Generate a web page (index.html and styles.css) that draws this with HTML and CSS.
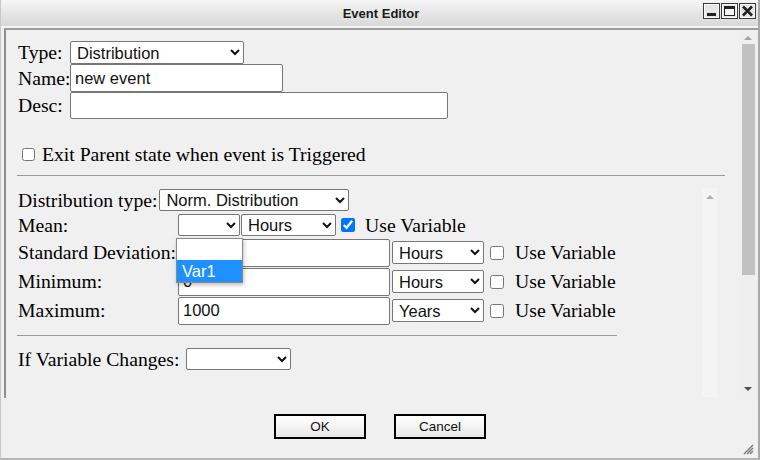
FILE: index.html
```html
<!DOCTYPE html>
<html>
<head>
<meta charset="utf-8">
<link rel="stylesheet" href="styles.css">
</head>
<body>
<div class="window">
  <div class="titlebar">
    <div class="title">Event Editor</div>
    <div class="ctrls">
      <svg class="wbtn" width="17" height="16" viewBox="0 0 17 16"><rect x="0.5" y="0.5" width="16" height="15" fill="#e6e6e6" stroke="#3a3a3a"/><rect x="1.5" y="1.5" width="14" height="13" fill="none" stroke="#fafafa"/><rect x="4" y="10" width="9" height="3" fill="#222"/></svg>
      <svg class="wbtn" width="17" height="16" viewBox="0 0 17 16"><rect x="0.5" y="0.5" width="16" height="15" fill="#e6e6e6" stroke="#3a3a3a"/><rect x="1.5" y="1.5" width="14" height="13" fill="none" stroke="#fafafa"/><rect x="3.5" y="3.5" width="10" height="9" fill="#f4f4f4" stroke="#222"/><rect x="3" y="3" width="11" height="3" fill="#222"/></svg>
      <svg class="wbtn" width="17" height="16" viewBox="0 0 17 16"><rect x="0.5" y="0.5" width="16" height="15" fill="#e6e6e6" stroke="#3a3a3a"/><rect x="1.5" y="1.5" width="14" height="13" fill="none" stroke="#fafafa"/><path d="M4 3.5 L13 12.5 M13 3.5 L4 12.5" stroke="#222" stroke-width="2.6"/></svg>
    </div>
  </div>
  <div class="main">
    <div class="pane">
      <div class="content">
        <div class="form-grid">
          <div class="lbl row-type">Type:</div>
          <div class="row-type"><select class="sel sel-type"><option>Distribution</option></select></div>
          <div class="lbl row-name">Name:</div>
          <div class="row-name"><input class="txt txt-name" type="text" value="new event"></div>
          <div class="lbl row-desc">Desc:</div>
          <div class="row-desc"><input class="txt txt-desc" type="text" value=""></div>
        </div>
        <label class="exit"><input type="checkbox" class="cb cb-exit"> Exit Parent state when event is Triggered</label>
        <div class="hr hr-wide"></div>
        <div class="dist">
          <div class="dist-body">
            <div class="drow drow-type">
              <span class="lbl">Distribution type:</span>
              <select class="sel sel-dist"><option>Norm. Distribution</option></select>
            </div>
            <div class="drow drow-mean">
              <span class="lbl dlbl">Mean:</span>
              <div class="ctl">
                <div class="popwrap">
                  <select class="sel sel-var"><option></option></select>
                  <div class="popup">
                    <div class="opt"></div>
                    <div class="opt opt-sel">Var1</div>
                  </div>
                </div>
                <select class="sel sel-unit-mean"><option>Hours</option></select>
                <input type="checkbox" class="cb cb-mean" checked>
                <span class="usevar">Use Variable</span>
              </div>
            </div>
            <div class="drow drow-in">
              <span class="lbl dlbl">Standard Deviation:</span>
              <div class="ctl">
                <input class="txt txt-num" type="text" value="">
                <select class="sel sel-unit"><option>Hours</option></select>
                <input type="checkbox" class="cb cb-row">
                <span class="usevar">Use Variable</span>
              </div>
            </div>
            <div class="drow drow-in">
              <span class="lbl dlbl">Minimum:</span>
              <div class="ctl">
                <input class="txt txt-num" type="text" value="0">
                <select class="sel sel-unit"><option>Hours</option></select>
                <input type="checkbox" class="cb cb-row">
                <span class="usevar">Use Variable</span>
              </div>
            </div>
            <div class="drow drow-in">
              <span class="lbl dlbl">Maximum:</span>
              <div class="ctl">
                <input class="txt txt-num" type="text" value="1000">
                <select class="sel sel-unit"><option>Years</option></select>
                <input type="checkbox" class="cb cb-row">
                <span class="usevar">Use Variable</span>
              </div>
            </div>
            <div class="hr hr-narrow"></div>
            <div class="drow drow-ifvar">
              <span class="lbl">If Variable Changes:</span>
              <select class="sel sel-ifvar"><option></option></select>
            </div>
          </div>
          <div class="mini-scroll"><span class="arr arr-up arr-light"></span></div>
        </div>
      </div>
      <div class="vscroll">
        <span class="arr arr-up"></span>
        <div class="thumb"></div>
        <div class="track"></div>
        <span class="arr arr-down"></span>
      </div>
    </div>
    <div class="actions">
      <button class="btn">OK</button>
      <button class="btn">Cancel</button>
    </div>
    <svg class="grip" width="12" height="12" viewBox="0 0 12 12"><path d="M11 2 L2 11 M11 5 L5 11 M11 8 L8 11" stroke="#777" stroke-width="1.4"/></svg>
  </div>
</div>
</body>
</html>
```

FILE: styles.css
```css
* { box-sizing: border-box; }
html, body { margin: 0; padding: 0; }
body {
  width: 760px;
  height: 460px;
  overflow: hidden;
  background: #f0f0f0;
  font-family: "Liberation Serif", "Times New Roman", serif;
  color: #000;
}
.window {
  width: 760px;
  height: 460px;
  display: flex;
  flex-direction: column;
  background: #f0f0f0;
  border-right: 2px solid #a9a9a9;
  border-bottom: 2px solid #b4b4b4;
  border-left: 1px solid #c8c8c8;
}
.titlebar {
  height: 28px;
  flex: none;
  position: relative;
  display: flex;
  align-items: center;
  justify-content: center;
  background: linear-gradient(#f6f6f6, #e6e6e6 50%, #d9d9d9);
  border-bottom: 2px solid #f4f4f4;
}
.title {
  font-family: "Liberation Sans", Arial, sans-serif;
  font-weight: bold;
  font-size: 13px;
  color: #1a1a1a;
  margin-left: 3px;
}
.ctrls {
  position: absolute;
  right: 2px;
  top: 3px;
  display: flex;
  gap: 1px;
}
.wbtn { display: block; }
.main {
  flex: 1;
  display: flex;
  flex-direction: column;
  position: relative;
}
.pane {
  height: 370px;
  margin-left: 3px;
  border-top: 2px solid #9d9d9d;
  border-left: 2px solid #8f8f8f;
  display: flex;
}
.content {
  flex: 1;
  padding: 11px 0 0 12px;
  position: relative;
}
.form-grid {
  display: grid;
  grid-template-columns: 52px auto;
  grid-template-rows: 23px 28px 27px;
  align-items: center;
  justify-items: start;
}
.lbl {
  font-size: 19.7px;
  white-space: nowrap;
}
.sel {
  font-family: "Liberation Sans", Arial, sans-serif;
  font-size: 16.5px;
  color: #111;
  height: 22px;
  border: 1px solid #767676;
  border-radius: 2px;
  background: #fff;
  padding: 0 0 0 2px;
  margin: 0;
  display: block;
}
.txt {
  font-family: "Liberation Sans", Arial, sans-serif;
  font-size: 16.5px;
  color: #111;
  height: 28px;
  border: 1px solid #767676;
  border-radius: 2px;
  background: #fff;
  padding: 0 4px;
  margin: 0;
  display: block;
}
.sel-type { width: 174px; height: 23px; }
.txt-name { width: 213px; }
.txt-desc { width: 378px; height: 27px; }
.exit {
  display: flex;
  align-items: center;
  font-size: 19.7px;
  margin-top: 25px;
  height: 20px;
  white-space: pre;
}
.cb {
  width: 14px;
  height: 14px;
  margin: 0 3px 0 4px;
}
.cb-exit {
  width: 13px;
  height: 13px;
  margin: 0 2px 0 4px;
}
.hr {
  height: 1px;
  background: #9a9a9a;
  margin-left: -1px;
}
.hr-wide {
  width: 708px;
  margin-top: 11px;
}
.dist {
  display: flex;
  margin-top: 12px;
  height: 209px;
}
.dist-body {
  width: 684px;
}
.mini-scroll {
  width: 15px;
  background: #f4f4f4;
  display: flex;
  justify-content: center;
  padding-top: 7px;
}
.drow {
  display: flex;
  align-items: center;
}
.drow-type { height: 24px; }
.drow-type .lbl { margin-right: 2px; }
.sel-dist { width: 190px; }
.dlbl { width: 160px; }
.ctl {
  display: flex;
  align-items: center;
}
.drow-mean { height: 26px; }
.drow-in { height: 29px; }
.popwrap { position: relative; }
.sel-var { width: 62px; }
.sel-unit-mean { width: 95px; margin-left: 1px; }
.cb-mean { margin: 0 10px 0 5px; }
.usevar { font-size: 19.7px; }
.txt-num { width: 212px; }
.sel-unit { width: 92px; height: 23px; margin-left: 2px; }
.cb-row { margin: 0 11px 0 6px; }
.popup {
  position: absolute;
  left: -2px;
  top: 24px;
  width: 67px;
  height: 45px;
  background: #fff;
  border: 1px solid #8a8a8a;
  box-shadow: 1px 2px 4px rgba(0,0,0,0.25);
  font-family: "Liberation Sans", Arial, sans-serif;
  font-size: 16.5px;
  z-index: 5;
}
.opt {
  height: 21px;
  line-height: 21px;
  padding-left: 5px;
}
.opt-sel {
  height: 22px;
  line-height: 22px;
  background: #1e90ff;
  color: #fff;
}
.hr-narrow {
  width: 600px;
  margin-top: 10px;
}
.drow-ifvar {
  height: 46px;
}
.drow-ifvar .lbl { margin-right: 7px; }
.sel-ifvar { width: 105px; }
.vscroll {
  width: 20px;
  flex: none;
  display: flex;
  flex-direction: column;
  align-items: center;
  padding: 6px 0 7px 0;
  background: #efefef;
}
.thumb {
  width: 13px;
  height: 231px;
  margin-top: 4px;
  background: #c1c1c1;
}
.track { flex: 1; }
.arr {
  width: 0;
  height: 0;
  border-left: 4px solid transparent;
  border-right: 4px solid transparent;
  display: block;
}
.arr-up { border-bottom: 4px solid #a3a3a3; }
.arr-light { border-bottom-color: #b0b0b0; }
.arr-down { border-top: 4px solid #505050; }
.actions {
  display: flex;
  justify-content: center;
  gap: 28px;
  padding-top: 16px;
  margin-left: 1px;
}
.btn {
  width: 92px;
  height: 25px;
  border: 2px solid #000;
  background: linear-gradient(#ffffff, #f3f3f3 55%, #e6e6e6);
  font-family: "Liberation Sans", Arial, sans-serif;
  font-size: 13.5px;
  color: #111;
  padding: 0;
  margin: 0;
}
.grip {
  position: absolute;
  right: 4px;
  bottom: 3px;
}
```
